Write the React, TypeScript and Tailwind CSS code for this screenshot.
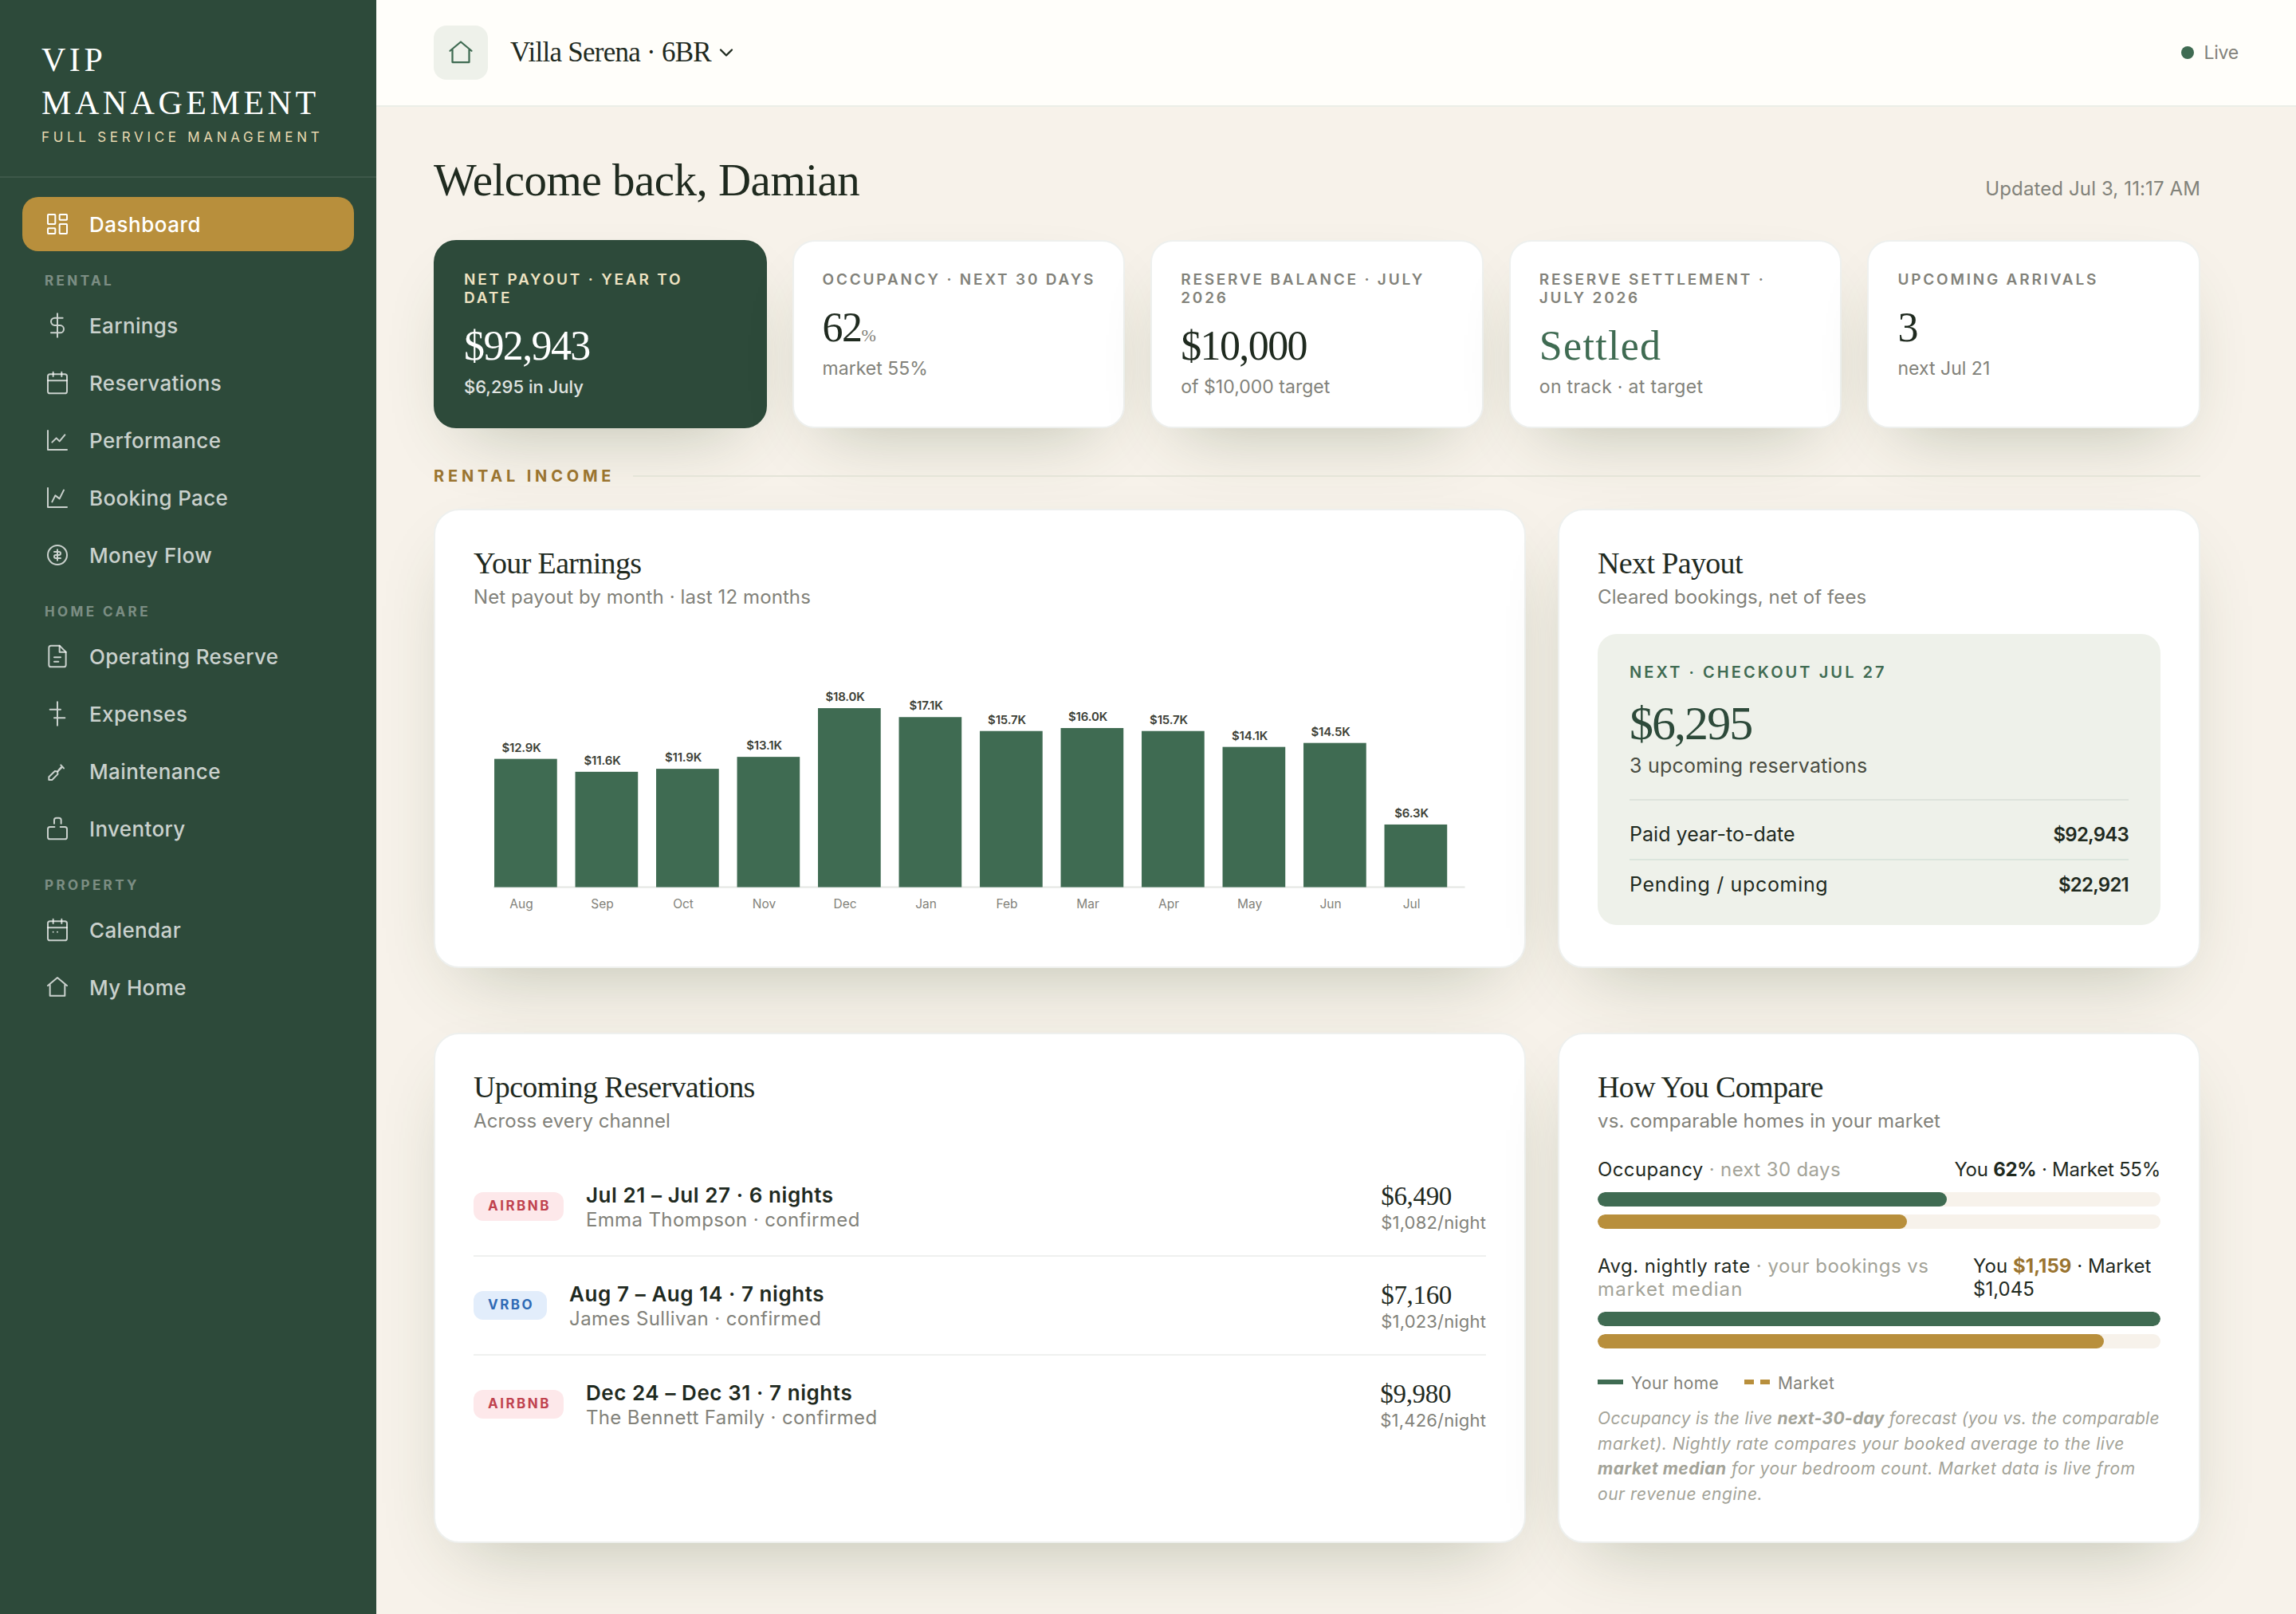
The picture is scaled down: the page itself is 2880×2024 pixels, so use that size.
import React from 'react';
import { ChevronDown } from 'lucide-react';

const ICONS: Record<string, React.ReactNode> = {
  dashboard: (
    <>
      <rect x="3" y="3" width="7" height="9" rx="0.5" />
      <rect x="14" y="3" width="7" height="5" rx="0.5" />
      <rect x="14" y="12" width="7" height="9" rx="0.5" />
      <rect x="3" y="16" width="7" height="5" rx="0.5" />
    </>
  ),
  dollar: <path d="M12 1v22M17 5H9.5a3.5 3.5 0 0 0 0 7h5a3.5 3.5 0 0 1 0 7H6" />,
  reservations: (
    <>
      <rect x="3" y="4" width="18" height="18" rx="2" />
      <path d="M16 2v4M8 2v4M3 10h18" />
    </>
  ),
  performance: <path d="M3 3v18h18M7 14l4-4 3 3 5-6" />,
  pace: <path d="M3 3v18h18M7 16l3-6 4 3 4-8" />,
  money: (
    <>
      <circle cx="12" cy="12" r="9" />
      <path d="M12 7v10M9 9h4.5a1.5 1.5 0 0 1 0 3h-3a1.5 1.5 0 0 0 0 3H15" />
    </>
  ),
  file: (
    <>
      <path d="M14 2H6a2 2 0 0 0-2 2v16a2 2 0 0 0 2 2h12a2 2 0 0 0 2-2V8z" />
      <path d="M14 2v6h6M9 13h6M9 17h4" />
    </>
  ),
  expenses: <path d="M12 1v22M5 8h10M9 16h10" />,
  maintenance: (
    <>
      <path d="M4 20.2v-2.7L9.6 12l2.5.3.2 2.6L7 20.2z" />
      <path d="M15.2 6.3l2.8 3M12.4 12.2l3.6-3.6M13 11.2l2.5-2.8" />
    </>
  ),
  inventory: (
    <>
      <path d="M9 7.3V4a2 2 0 0 1 2-2h2.5a2 2 0 0 1 2 2v3.3" />
      <path d="M9.3 10.5H5a2 2 0 0 0-2 2V20a2 2 0 0 0 2 2h14a2 2 0 0 0 2-2v-7.5a2 2 0 0 0-2-2h-4.2" />
    </>
  ),
  calendar: (
    <>
      <rect x="3" y="4" width="18" height="18" rx="2" />
      <path d="M16 2v4M8 2v4M3 10h18M8 14h.01M12 14h.01" />
    </>
  ),
  home: <path d="M3 10.5L12 3l9 7.5M5 9.5V20h14V9.5" />,
};

function Icon({ name, className }: { name: string; className?: string }) {
  return (
    <svg
      viewBox="0 0 24 24"
      fill="none"
      stroke="currentColor"
      strokeWidth="1.5"
      strokeLinecap="round"
      strokeLinejoin="round"
      className={className}
      aria-hidden="true"
    >
      {ICONS[name]}
    </svg>
  );
}

const NAV = [
  {
    title: 'Rental',
    items: [
      ['dollar', 'Earnings'],
      ['reservations', 'Reservations'],
      ['performance', 'Performance'],
      ['pace', 'Booking Pace'],
      ['money', 'Money Flow'],
    ],
  },
  {
    title: 'Home Care',
    items: [
      ['file', 'Operating Reserve'],
      ['expenses', 'Expenses'],
      ['maintenance', 'Maintenance'],
      ['inventory', 'Inventory'],
    ],
  },
  {
    title: 'Property',
    items: [
      ['calendar', 'Calendar'],
      ['home', 'My Home'],
    ],
  },
];

function NavItem({ icon, label, active }: { icon: string; label: string; active?: boolean }) {
  return (
    <a
      className={`flex h-[68px] items-center gap-6 rounded-[20px] px-7 text-[26px] font-medium ${
        active ? 'bg-[#b88f3c] tracking-[0.019em] text-white' : 'tracking-[0.014em] text-white/75'
      }`}
    >
      <Icon name={icon} className="size-8" />
      <span className="pt-px">{label}</span>
    </a>
  );
}

function Sidebar() {
  return (
    <aside className="w-[472px] shrink-0 bg-[#2d4a3a]">
      <div className="h-[223px] border-b-2 border-white/8 px-[52px] pt-12">
        <div className="font-['Liberation_Serif',serif] text-[42px] leading-[54px] tracking-[0.108em] text-white">
          VIP
          <br />
          MANAGEMENT
        </div>
        <div className="mt-1.5 whitespace-nowrap text-[17px] leading-5 tracking-[0.276em] text-[#e8d9b0]">
          FULL SERVICE MANAGEMENT
        </div>
      </div>
      <nav className="flex flex-col gap-1 px-7 py-6">
        <NavItem icon="dashboard" label="Dashboard" active />
        {NAV.map((group) => (
          <React.Fragment key={group.title}>
            <div className="flex h-[51px] items-center px-7 pt-[17px] text-[17px] font-bold uppercase tracking-[0.2em] text-white/40">
              {group.title}
            </div>
            {group.items.map(([icon, label]) => (
              <NavItem key={label} icon={icon} label={label} />
            ))}
          </React.Fragment>
        ))}
      </nav>
    </aside>
  );
}

function Header() {
  return (
    <header className="flex h-[134px] items-center justify-between border-b-2 border-[#ebeee8] bg-[#fffefa] px-[72px]">
      <div className="flex items-center">
        <span className="flex size-[68px] items-center justify-center rounded-2xl bg-[#eef1ea] text-[#3f6b52]">
          <Icon name="home" className="size-9" />
        </span>
        <span className="ml-7 pt-px font-['Liberation_Serif',serif] text-[35px] tracking-[-0.021em]">
          Villa Serena · 6BR
        </span>
        <ChevronDown className="ml-[5px] size-7" strokeWidth={2} />
      </div>
      <div className="flex items-center gap-3 text-[23px] tracking-[-0.01em] text-[#82827a]">
        <span className="size-4 rounded-full bg-[#3f6b52]" />
        Live
      </div>
    </header>
  );
}

interface KpiProps {
  label: string;
  value: React.ReactNode;
  sub: string;
  dark?: boolean;
  valueClass?: string;
  subClass?: string;
}

function Kpi({ label, value, sub, dark, valueClass, subClass }: KpiProps) {
  return (
    <div
      className={`h-[236px] rounded-[28px] border-2 p-9 shadow-[0_36px_92px_-40px_rgba(50,74,34,0.33)] ${
        dark ? 'border-[#2d4a3a] bg-[#2d4a3a] text-white' : 'border-[#eef0ee] bg-white'
      }`}
    >
      <div
        className={`-mr-8 text-[19px] font-semibold uppercase leading-[23px] tracking-[0.147em] whitespace-pre-line ${
          dark ? 'text-[#efe3c2]' : 'text-[#82827a]'
        }`}
      >
        {label}
      </div>
      <div
        className={`mt-[17px] h-16 font-['Liberation_Serif',serif] text-[52px] leading-[64px] tracking-[-0.031em] ${valueClass ?? ''}`}
      >
        {value}
      </div>
      <div
        className={`mt-[5px] leading-7 ${dark ? 'font-medium text-white/85' : 'text-[#82827a]'} ${
          subClass ?? 'text-[23px] tracking-[0.001em]'
        }`}
      >
        {sub}
      </div>
    </div>
  );
}

function Card({
  title,
  subtitle,
  className,
  children,
}: {
  title: string;
  subtitle: string;
  className?: string;
  children: React.ReactNode;
}) {
  return (
    <section
      className={`rounded-[32px] border-2 border-[#eef0ee] bg-white p-12 shadow-[0_36px_92px_-40px_rgba(50,74,34,0.33)] ${className}`}
    >
      <h2 className="font-['Liberation_Serif',serif] text-[38px] leading-9 tracking-[-0.017em]">{title}</h2>
      <p className="mt-[11px] text-[24px] leading-7 tracking-[0.004em] text-[#82827a]">{subtitle}</p>
      {children}
    </section>
  );
}

const EARNINGS: [string, number, string][] = [
  ['Aug', 12.9, '$12.9K'],
  ['Sep', 11.6, '$11.6K'],
  ['Oct', 11.9, '$11.9K'],
  ['Nov', 13.1, '$13.1K'],
  ['Dec', 18.0, '$18.0K'],
  ['Jan', 17.1, '$17.1K'],
  ['Feb', 15.7, '$15.7K'],
  ['Mar', 16.0, '$16.0K'],
  ['Apr', 15.7, '$15.7K'],
  ['May', 14.1, '$14.1K'],
  ['Jun', 14.5, '$14.5K'],
  ['Jul', 6.3, '$6.3K'],
];

function EarningsChart() {
  const base = 349.5;
  return (
    <svg viewBox="0 0 1270 400" className="block h-[400px] w-full">
      <line x1="25" x2="1243.5" y1={base} y2={base} stroke="#e3e6e2" strokeWidth="2" />
      {EARNINGS.map(([month, value, label], i) => {
        const x = 26 + i * 101.5;
        const h = value * 12.47;
        return (
          <g key={month} textAnchor="middle">
            <rect x={x} y={base - h} width="78.7" height={h} fill="#3f6b52" />
            <text x={x + 34} y={base - h - 9} className="fill-[#3c4036] text-[15px] font-semibold tracking-[-0.01em]">
              {label}
            </text>
            <text x={x + 34} y="376" className="fill-[#82827a] text-[15.5px]">
              {month}
            </text>
          </g>
        );
      })}
    </svg>
  );
}

const RESERVATIONS = [
  {
    channel: 'AIRBNB',
    dates: 'Jul 21 – Jul 27 · 6 nights',
    guest: 'Emma Thompson · confirmed',
    amount: '$6,490',
    nightly: '$1,082/night',
  },
  {
    channel: 'VRBO',
    dates: 'Aug 7 – Aug 14 · 7 nights',
    guest: 'James Sullivan · confirmed',
    amount: '$7,160',
    nightly: '$1,023/night',
  },
  {
    channel: 'AIRBNB',
    dates: 'Dec 24 – Dec 31 · 7 nights',
    guest: 'The Bennett Family · confirmed',
    amount: '$9,980',
    nightly: '$1,426/night',
  },
];

function ReservationList() {
  return (
    <div className="mt-8">
      {RESERVATIONS.map((r) => (
        <div key={r.dates} className="flex h-[124px] items-center border-b-2 border-[#eff0ef] last:border-transparent">
          <span
            className={`flex h-9 items-center rounded-[12px] pl-[18px] pr-4 text-[17px] font-bold tracking-[0.145em] ${
              r.channel === 'AIRBNB' ? 'bg-[#fde8ea] text-[#c0434f]' : 'bg-[#e2edfb] text-[#2f6ab5]'
            }`}
          >
            {r.channel}
          </span>
          <div className="ml-7 flex-1">
            <div className="text-[26px] font-semibold leading-8 tracking-[0.022em]">{r.dates}</div>
            <div className="text-[24px] leading-[29px] tracking-[0.016em] text-[#82827a]">{r.guest}</div>
          </div>
          <div>
            <div className="font-['Liberation_Serif',serif] text-[33px] leading-10 tracking-[-0.01em]">{r.amount}</div>
            <div className="text-[22px] leading-[27px] tracking-[0.008em] text-[#82827a]">{r.nightly}</div>
          </div>
        </div>
      ))}
    </div>
  );
}

function Meter({ you, market }: { you: number; market: number }) {
  return (
    <div className="mt-3.5 flex flex-col gap-2.5">
      <div className="h-[18px] overflow-hidden rounded-full bg-[#f7f2eb]">
        <div className="h-full rounded-full bg-[#3f6b52]" style={{ width: `${you}%` }} />
      </div>
      <div className="h-[18px] overflow-hidden rounded-full bg-[#f7f2eb]">
        <div className="h-full rounded-full bg-[#b88f3c]" style={{ width: `${market}%` }} />
      </div>
    </div>
  );
}

function Compare() {
  return (
    <>
      <div className="mt-8 flex justify-between whitespace-nowrap text-[24px] leading-[29px] tracking-[0.015em]">
        <span>
          Occupancy <span className="text-[#a3a398]">· next 30 days</span>
        </span>
        <span className="tracking-[-0.011em]">
          You <b>62%</b> · Market 55%
        </span>
      </div>
      <Meter you={62} market={55} />
      <div className="mt-8 flex justify-between whitespace-nowrap text-[24px] leading-[29px] tracking-[0.02em]">
        <span>
          Avg. nightly rate <span className="text-[#a3a398]">· your bookings vs</span>
          <br />
          <span className="tracking-[0.045em] text-[#a3a398]">market median</span>
        </span>
        <span className="w-[235px] tracking-[0.002em]">
          You <b className="text-[#9a7430]">$1,159</b> · Market
          <br />
          $1,045
        </span>
      </div>
      <Meter you={100} market={90} />
      <div className="mt-8 flex items-center text-[21px] leading-6 tracking-[0.015em] text-[#82827a]">
        <span className="-mt-1 mr-2.5 h-1.5 w-8 bg-[#3f6b52]" />
        Your home
        <span className="-mt-1 ml-8 mr-2.5 flex h-1.5 w-8 justify-between">
          <i className="w-3 bg-[#b88f3c]" />
          <i className="w-3 bg-[#b88f3c]" />
        </span>
        Market
      </div>
      <p className="mt-4 whitespace-nowrap text-[21px] italic leading-[31.6px] tracking-[0.024em] text-[#a3a398]">
        <span className="tracking-[0.014em]">
          Occupancy is the live <b>next-30-day</b> forecast (you vs. the comparable
        </span>
        <br />
        market). Nightly rate compares your booked average to the live
        <br />
        <b>market median</b> for your bedroom count. Market data is live from
        <br />
        our revenue engine.
      </p>
    </>
  );
}

function NextPayout() {
  return (
    <div className="mt-8 h-[365px] rounded-3xl bg-[#eef1ea] px-10 pt-[37px]">
      <div className="text-[20px] font-semibold leading-[23px] tracking-[0.153em] text-[#3f6b52]">
        NEXT · CHECKOUT JUL 27
      </div>
      <div className="mt-[22px] font-['Liberation_Serif',serif] text-[60px] leading-[60px] tracking-[-0.033em] text-[#2d4a3a]">
        $6,295
      </div>
      <div className="mt-2 text-[25px] leading-[30px] tracking-[0.009em] text-[#4a4d42]">3 upcoming reservations</div>
      <div className="mt-[27px] border-t-2 border-[#dde3dc] pt-3 text-[25px]">
        <div className="flex h-[63px] items-center justify-between border-b-2 border-[#dbe5dd]">
          <span className="tracking-[0.001em]">Paid year-to-date</span>
          <span className="text-[24px] font-semibold tracking-[-0.032em]">$92,943</span>
        </div>
        <div className="flex h-[61px] items-center justify-between">
          <span className="tracking-[0.027em]">Pending / upcoming</span>
          <span className="text-[24px] font-semibold tracking-[-0.032em]">$22,921</span>
        </div>
      </div>
    </div>
  );
}

export default function App() {
  return (
    <div className="flex h-[2024px] w-[2880px] overflow-hidden bg-[#f7f2ea] font-['Inter',sans-serif] text-[#1f2a1f]">
      <Sidebar />
      <div className="flex-1">
        <Header />
        <main className="w-[2360px] px-[72px] pt-[57px]">
          <div className="flex items-baseline justify-between">
            <h1 className="font-['Liberation_Serif',serif] text-[57px] leading-[70px] tracking-[-0.009em]">
              Welcome back, Damian
            </h1>
            <span className="text-[24px] tracking-[0.005em] text-[#82827a]">Updated Jul 3, 11:17 AM</span>
          </div>

          <div className="mt-10 grid grid-cols-5 gap-8">
            <Kpi
              dark
              label={'Net payout · Year to\nDate'}
              value="$92,943"
              sub="$6,295 in July"
              subClass="text-[22px]"
            />
            <Kpi
              label="Occupancy · Next 30 days"
              value={
                <>
                  62<span className="text-[22px] leading-none text-[#82827a]">%</span>
                </>
              }
              sub="market 55%"
            />
            <Kpi label={'Reserve balance · July\n2026'} value="$10,000" sub="of $10,000 target" />
            <Kpi
              label={'Reserve settlement ·\nJuly 2026'}
              value="Settled"
              valueClass="tracking-[0.025em] text-[#3f6b52]"
              sub="on track · at target"
              subClass="text-[23px] tracking-[0.014em]"
            />
            <Kpi label="Upcoming arrivals" value="3" sub="next Jul 21" />
          </div>

          <div className="mt-12 flex items-center gap-[23px]">
            <span className="text-[20px] font-bold leading-6 tracking-[0.24em] text-[#9a7430]">RENTAL INCOME</span>
            <span className="h-0.5 flex-1 bg-[#e4e4d8]" />
          </div>

          <div className="mt-[29px] grid grid-cols-[minmax(0,1.7fr)_minmax(0,1fr)] gap-10">
            <Card title="Your Earnings" subtitle="Net payout by month · last 12 months" className="h-[576px]">
              <EarningsChart />
            </Card>
            <Card title="Next Payout" subtitle="Cleared bookings, net of fees" className="h-[576px]">
              <NextPayout />
            </Card>
          </div>

          <div className="mt-[81px] grid grid-cols-[minmax(0,1.7fr)_minmax(0,1fr)] gap-10">
            <Card title="Upcoming Reservations" subtitle="Across every channel" className="h-[640px]">
              <ReservationList />
            </Card>
            <Card title="How You Compare" subtitle="vs. comparable homes in your market" className="h-[640px]">
              <Compare />
            </Card>
          </div>
        </main>
      </div>
    </div>
  );
}
